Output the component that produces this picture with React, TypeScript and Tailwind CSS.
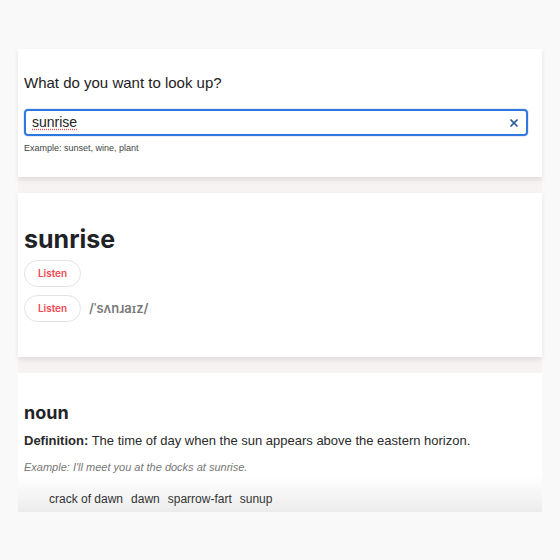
import { X } from "lucide-react";

const body = { fontFamily: "'Liberation Sans', Arial, sans-serif" };

function ListenButton() {
  return (
    <button className="h-[27px] w-[57px] rounded-full border border-[#e3e3e3] bg-white text-[10px] font-semibold text-[#f2474f]">
      Listen
    </button>
  );
}

export default function App() {
  return (
    <div
      className="min-h-[560px] w-full bg-[#f9f9f9] pt-[49px]"
      style={{ fontFamily: "Inter, 'Noto Sans', sans-serif" }}
    >
      <div className="mx-[18px] flex flex-col gap-[16px] bg-[#f8f3f3]">
        {/* search */}
        <div className="h-[128px] bg-white pl-[6px] pr-[14px] pt-[24px] shadow-[0_3px_5px_rgba(0,0,0,0.09)]" style={body}>
          <h2 className="text-[15px] leading-[20px] text-[#222]">What do you want to look up?</h2>
          <div className="mt-[16px] flex h-[27px] items-center rounded-[4px] border-2 border-[#2f78dd] pl-[6px] pr-[6px] shadow-[0_0_0_1px_#e8edf5]">
            <span className="flex-1 text-[14px] text-[#222] underline decoration-[#e05050] decoration-dotted underline-offset-2">
              sunrise
            </span>
            <X size={12} strokeWidth={3.5} className="text-[#2c5a98]" />
          </div>
          <p className="mt-[6px] text-[9px] text-[#444]">Example: sunset, wine, plant</p>
        </div>

        {/* word */}
        <div className="h-[164px] bg-white px-[6px] pt-[31px] shadow-[0_3px_5px_rgba(0,0,0,0.09)]">
          <h1 className="text-[25px] font-bold leading-[30px] text-[#1f2227]">sunrise</h1>
          <div className="mt-[6px] flex flex-col gap-[8px]">
            <div className="flex">
              <ListenButton />
            </div>
            <div className="flex items-center gap-[8px]">
              <ListenButton />
              <span className="text-[13px] font-semibold text-[#7a7a7a]">/ˈsʌnɹaɪz/</span>
            </div>
          </div>
        </div>

        {/* meaning */}
        <div className="h-[139px] bg-[linear-gradient(to_bottom,#ffffff_0%,#ffffff_74%,#ececec_100%)] px-[6px] pt-[28px]">
          <h3 className="text-[18px] font-bold leading-[24px] text-[#1f2227]">noun</h3>
          <div style={body}>
            <p className="mt-[7px] text-[13px] leading-[18px] text-[#2a2a2a]">
              <span className="font-bold">Definition:</span> The time of day when the sun appears above the eastern horizon.
            </p>
            <p className="mt-[10px] text-[11px] italic leading-[14px] text-[#777]">
              Example: I&apos;ll meet you at the docks at sunrise.
            </p>
            <div className="mt-[16px] flex gap-[8px] pl-[25px] text-[12px] text-[#333]">
              <span>crack of dawn</span>
              <span>dawn</span>
              <span>sparrow-fart</span>
              <span>sunup</span>
            </div>
          </div>
        </div>
      </div>
    </div>
  );
}
